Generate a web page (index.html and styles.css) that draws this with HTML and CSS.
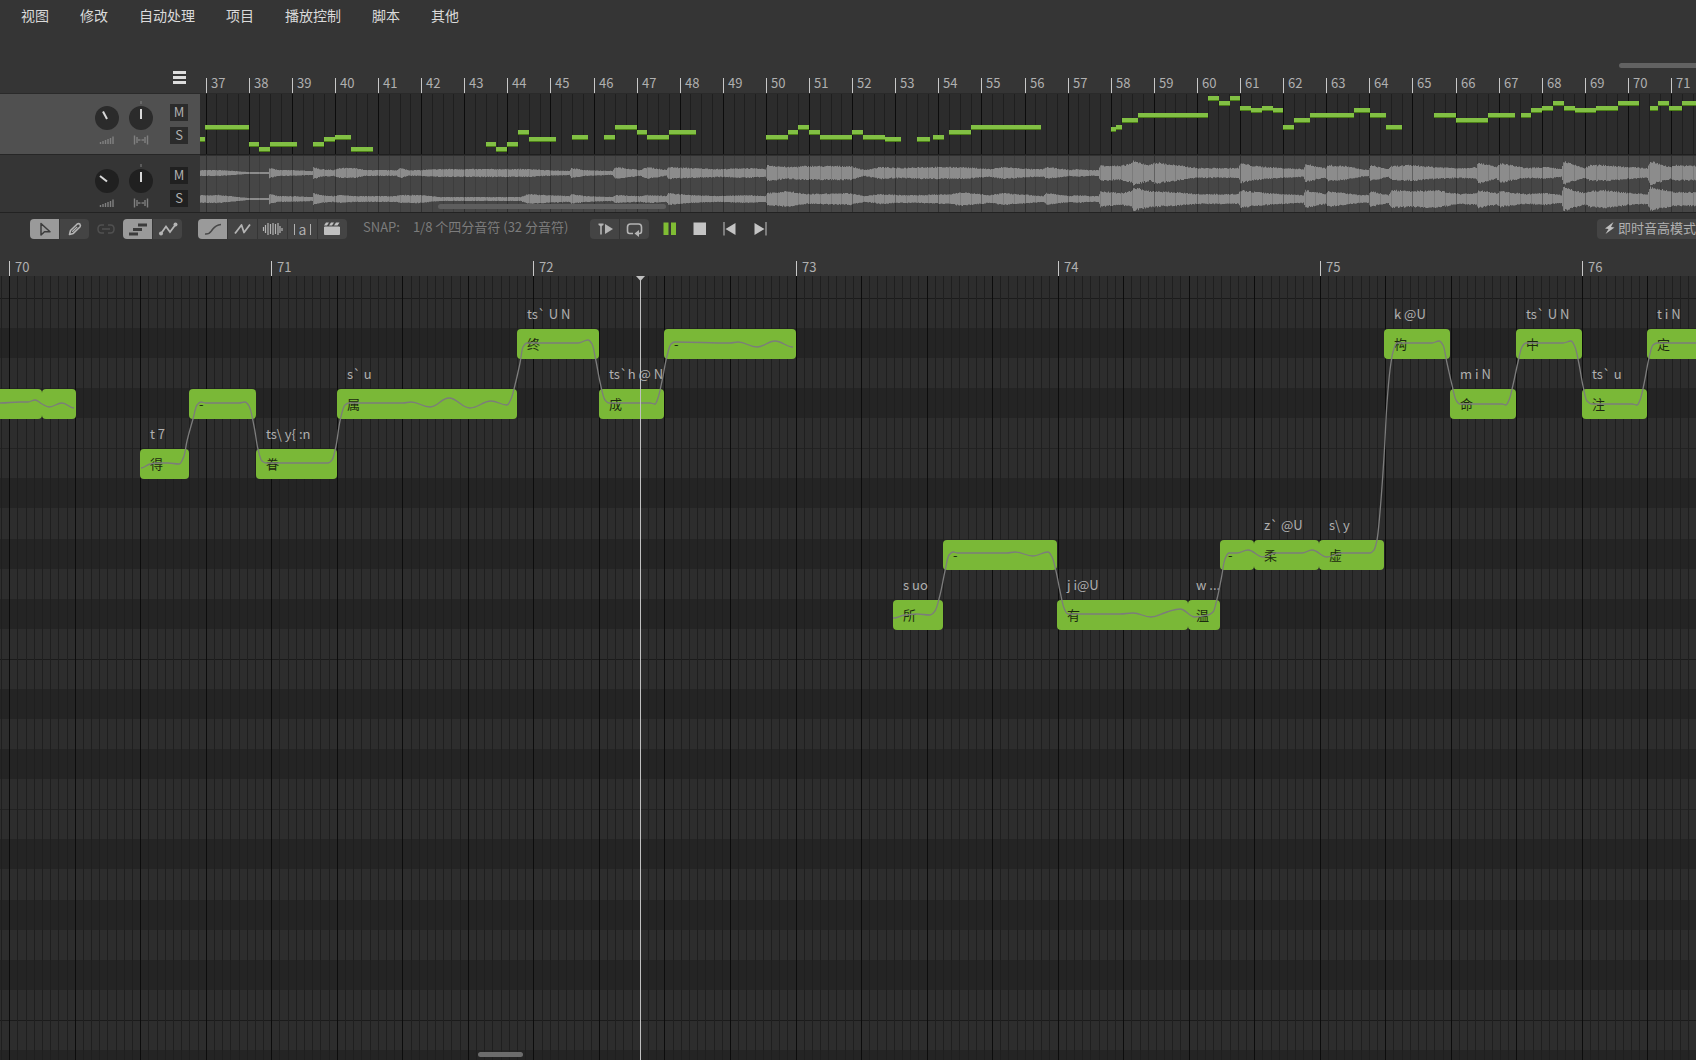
FILE: index.html
```html
<!DOCTYPE html>
<html lang="zh-CN">
<head>
<meta charset="utf-8">
<title>钢琴卷帘</title>
<link rel="stylesheet" href="styles.css">
</head>
<body>
<div class="app">
  <nav class="menu" aria-label="主菜单">
    <button type="button">视图</button>
    <button type="button">修改</button>
    <button type="button">自动处理</button>
    <button type="button">项目</button>
    <button type="button">播放控制</button>
    <button type="button">脚本</button>
    <button type="button">其他</button>
  </nav>

  <section class="arranger" aria-label="编排">
    <div class="corner">
      <button type="button" class="list-button" aria-label="音轨列表">
        <svg width="14" height="14" viewBox="0 0 14 14"><path d="M0 1.5h13M0 6.5h13M0 11.500h13" stroke="#dcdcdc" stroke-width="3"/></svg>
      </button>
    </div>
    <div class="ruler ruler-top" id="topRuler"><div class="thumb thumb-top"></div></div>

    <div class="track-head selected">
      <label class="knob" title="音量">
        <svg width="24" height="44" viewBox="0 0 24 44"><circle cx="12" cy="17" r="12" class="dial"/><path d="M8 10.500L12 18" class="needle"/><use href="#levels"/></svg>
        <input type="range" aria-label="音量">
      </label>
      <label class="knob" title="声像">
        <svg width="24" height="44" viewBox="0 0 24 44"><path d="M12 0v3" class="mark"/><circle cx="12" cy="17" r="12" class="dial"/><path d="M12 8v10" class="needle"/><use href="#pan"/></svg>
        <input type="range" aria-label="声像">
      </label>
      <div class="mute-solo"><button type="button">M</button><button type="button">S</button></div>
    </div>
    <div class="lane lane-notes" id="noteLane"></div>

    <div class="track-head">
      <label class="knob" title="音量">
        <svg width="24" height="44" viewBox="0 0 24 44"><circle cx="12" cy="17" r="12" class="dial"/><path d="M5 12L12 17.500" class="needle"/><use href="#levels"/></svg>
        <input type="range" aria-label="音量">
      </label>
      <label class="knob" title="声像">
        <svg width="24" height="44" viewBox="0 0 24 44"><path d="M12 0v3" class="mark"/><circle cx="12" cy="17" r="12" class="dial"/><path d="M12 8v10" class="needle"/><use href="#pan"/></svg>
        <input type="range" aria-label="声像">
      </label>
      <div class="mute-solo"><button type="button">M</button><button type="button">S</button></div>
    </div>
    <div class="lane lane-audio" id="audioLane"><div class="thumb thumb-lane"></div></div>
  </section>

  <div class="toolbar" role="toolbar" aria-label="工具栏">
    <div class="group">
      <button type="button" class="on" aria-label="选择"><svg width="29" height="20" viewBox="0 0 29 20"><path d="M11 4.500V16l3.500-3.300H20z" fill="none" stroke="#3c3c3c" stroke-width="1.500" stroke-linejoin="round"/></svg></button>
      <button type="button" aria-label="铅笔"><svg width="29" height="20" viewBox="0 0 29 20"><path d="M9.500 15.500l1-4 6.500-6.300q1.600-1.200 2.900 0 1.100 1.400 0 2.800l-6.600 6.400z" fill="none" stroke="#b4b4b4" stroke-width="1.600" stroke-linejoin="round"/><path d="M12.200 12.800l5-4.900" stroke="#b4b4b4" stroke-width="1.200"/></svg></button>
    </div>
    <button type="button" class="link-button" aria-label="链接"><svg width="18" height="20" viewBox="0 0 18 20"><path d="M7 6H4.500Q1 6 1 10t3.500 4H7M11 6h2.500Q17 6 17 10t-3.500 4H11M5 10h8" fill="none" stroke="#505050" stroke-width="1.500"/></svg></button>
    <div class="group">
      <button type="button" class="on" aria-label="音符"><svg width="29" height="20" viewBox="0 0 29 20"><path d="M15 6h9M10 10.500h9M6 15h9" stroke="#3c3c3c" stroke-width="3"/></svg></button>
      <button type="button" aria-label="参数"><svg width="29" height="20" viewBox="0 0 29 20"><path d="M8 14.500l5-7 4 5.500 6-8" fill="none" stroke="#b4b4b4" stroke-width="1.800"/><circle cx="8" cy="14.500" r="2" fill="#b4b4b4"/><circle cx="22.500" cy="5.500" r="2" fill="#b4b4b4"/></svg></button>
    </div>
    <div class="group group-wide">
      <button type="button" class="on" aria-label="曲线"><svg width="29" height="20" viewBox="0 0 29 20"><path d="M7 15c5 .500 5.500-2 7.500-4.500S18 6 23 5.500" fill="none" stroke="#484848" stroke-width="1.600"/></svg></button>
      <button type="button" aria-label="折线"><svg width="29" height="20" viewBox="0 0 29 20"><path d="M7 14.500l6.500-8.500 2.500 7.500 6-8" fill="none" stroke="#b4b4b4" stroke-width="1.800" stroke-linejoin="round"/></svg></button>
      <button type="button" aria-label="波形"><svg width="29" height="20" viewBox="0 0 29 20"><path d="M5.500 8v4M7.500 6v8M10 4v12M12.500 5v10M15 4v12M17.500 5v10M20 4v12M22 7v7M24 9v3" stroke="#b4b4b4" stroke-width="1.200"/></svg></button>
      <button type="button" class="phone" aria-label="音素"><i></i><span>a</span><i></i></button>
      <button type="button" aria-label="场记板"><svg width="29" height="20" viewBox="0 0 29 20"><path d="M6.500 8h15v7.500h-15z" fill="#c0c0c0" stroke="#c0c0c0" stroke-linejoin="round"/><path d="M6 6.500l2-3h3l-2 3zM11 6.500l2-3h3l-2 3zM16 6.500l2-3h3.500l-2 3z" fill="#c0c0c0"/></svg></button>
    </div>
    <label class="snap-label" for="snap">SNAP:</label>
    <select class="snap" id="snap"><option>1/8 个四分音符 (32 分音符)</option></select>
    <div class="group">
      <button type="button" aria-label="从标记播放"><svg width="29" height="20" viewBox="0 0 29 20"><path d="M8.500 4.500h5v1.500l-2.500 1.500-2.500-1.500z" fill="#b4b4b4"/><path d="M11 6v9.500" stroke="#b4b4b4" stroke-width="1.600"/><path d="M15 5l8 5-8 5z" fill="#b4b4b4"/></svg></button>
      <button type="button" aria-label="循环"><svg width="29" height="20" viewBox="0 0 29 20"><path d="M13 14.500H9.500Q7.500 14.500 7.500 12V8Q7.500 5 10.500 5h8Q21.500 5 21.500 8v4Q21.500 14.500 19.500 14.500h-2" fill="none" stroke="#b4b4b4" stroke-width="1.600"/><path d="M19 11v7l-4.500-3.500z" fill="#b4b4b4"/></svg></button>
    </div>
    <div class="transport">
      <button type="button" aria-label="暂停"><svg width="14" height="14" viewBox="0 0 14 14"><path d="M.500.500h5v12.500h-5zM8 .500h5v12.500H8z" fill="#80bd34"/></svg></button>
      <button type="button" aria-label="停止"><svg width="14" height="14" viewBox="0 0 14 14"><path d="M.500.500H13V13H.500z" fill="#c4c4c4"/></svg></button>
      <button type="button" aria-label="回到开头"><svg width="14" height="14" viewBox="0 0 14 14"><path d="M.500 0h1v13.500h-1zM12.500 1v12L2.500 7z" fill="#c4c4c4"/></svg></button>
      <button type="button" aria-label="跳到结尾"><svg width="14" height="14" viewBox="0 0 14 14"><path d="M12.500 0h1v13.500h-1zM1.500 1v12l10-6z" fill="#c4c4c4"/></svg></button>
    </div>
    <button type="button" class="live"><svg width="11" height="14" viewBox="0 0 11 14"><path d="M9.500 1L1 7.500l3.500.500L1.500 13 10.500 6.500 7 6z" fill="#c0c0c0"/></svg>即时音高模式</button>
  </div>

  <div class="ruler ruler-roll" id="rollRuler"></div>
  <main class="roll" id="roll">
    <div class="playhead"><svg width="9" height="5" viewBox="0 0 9 5"><path d="M0 0h9L4.500 5z" fill="#c0c0c0"/></svg></div>
    <div class="thumb thumb-roll"></div>
  </main>
</div>

<svg class="defs" width="0" height="0" aria-hidden="true">
  <defs>
    <g id="levels"><path d="M5.500 41v2M8 40v3M10.500 39v4M13 38v5M15.500 37v6M18 35.500v7.500" stroke="#808080" stroke-width="1.400"/></g>
    <g id="pan"><path d="M5.500 34.500v9M8 36v6M16 36v6M18.500 34.500v9M10 38v2M14 38v2M12 38.500v1" stroke="#808080" stroke-width="1.400"/></g>
  </defs>
</svg>
<script src="app.js"></script>
</body>
</html>
```
FILE: styles.css
```css
* { box-sizing: border-box; }

body {
  margin: 0;
  background: #353535;
  color: #b0b0b0;
  font: 13px/16px "Noto Sans CJK SC", "Noto Sans", sans-serif;
}

button, select, input {
  margin: 0;
  padding: 0;
  border: 0;
  background: none;
  color: inherit;
  font: inherit;
}

svg { display: block; }
.defs { position: absolute; }

.app {
  display: flex;
  flex-direction: column;
  min-height: 100vh;
  overflow: hidden;
}

/* Menu */
.menu {
  display: flex;
  gap: 31px;
  height: 30px;
  padding-left: 21px;
  color: #dadada;
  font-size: 14px;
}

/* Arranger */
.arranger {
  display: grid;
  grid-template-columns: 200px 1fr;
  grid-template-rows: 64px 61px 57px;
  border-bottom: 1px solid #222;
}

.corner {
  display: flex;
  justify-content: flex-end;
  align-items: flex-end;
  padding: 0 13px 8px 0;
  border-bottom: 1px solid #2a2a2a;
}

.ruler {
  position: relative;
  overflow: hidden;
}

.ruler-top { border-bottom: 1px solid #2a2a2a; }
.ruler-roll { height: 31px; }

.bar {
  position: absolute;
  bottom: 0;
  height: 15px;
  padding-left: 4px;
  border-left: 1px solid #c8c8c8;
  line-height: 12px;
}
.ruler-top .bar { line-height: 10px; }
.ruler-roll .bar { padding-left: 5px; }

.track-head {
  display: flex;
  justify-content: flex-end;
  align-items: flex-start;
  gap: 10px;
  padding: 7px 12px 0 0;
}
.track-head.selected {
  background: #505050;
  border-bottom: 1px solid #262626;
}
.track-head:not(.selected) { padding-top: 9px; }

.knob {
  position: relative;
}
.knob input {
  position: absolute;
  inset: 0;
  width: 100%;
  opacity: 0;
}
.dial { fill: #202020; }
.selected .dial { fill: #2b2b2b; }
.needle { stroke: #d8d8d8; stroke-width: 2; }
.mark { stroke: #808080; }

.mute-solo {
  display: grid;
  gap: 6px;
  padding-top: 3px;
  margin-left: 7px;
}
.mute-solo button {
  width: 18px;
  height: 17px;
  padding-bottom: 2px;
  background: #202020;
  line-height: 15px;
}
.selected .mute-solo button { background: #2b2b2b; }

.lane {
  position: relative;
  overflow: hidden;
}
.lane-notes { background: #2c2c2c; border-bottom: 1px solid #1f1f1f; }
.lane-audio { background: #464646; border-top: 1px solid #303030; }

.drawing {
  position: absolute;
  left: 0;
  top: 0;
  width: 100%;
  height: 100%;
}

.thumb {
  position: absolute;
  z-index: 3;
  height: 5px;
  border-radius: 3px;
}
.thumb-top { left: 1419px; right: -20px; top: 33px; background: #626262; }
.thumb-lane { left: 238px; width: 228px; bottom: 3px; background: #5e5e5e; }
.thumb-roll { left: 478px; width: 45px; bottom: 3px; background: #6c6c6c; }

/* Toolbar */
.toolbar {
  display: flex;
  align-items: flex-start;
  height: 32px;
  padding: 6px 0 0 30px;
}
.group {
  display: flex;
  gap: 1px;
  border-radius: 4px;
  overflow: hidden;
}
.group button {
  width: 29px;
  height: 20px;
  background: #444;
}
.group .on { background: #9a9a9a; }
.group-wide { margin: 0 16px; }
.link-button { margin: 0 8px; }

.phone {
  display: flex;
  justify-content: center;
  align-items: center;
  gap: 4px;
  line-height: 16px;
}
.phone span { font-size: 14px; line-height: 14px; padding-bottom: 1px; }
.phone i { width: 1px; height: 11px; background: #b0b0b0; }

.snap-label, .snap {
  color: #7c7c7c;
  line-height: 16px;
}
.snap {
  appearance: none;
  width: 163px;
  height: 16px;
  margin: 0 14px 0 13px;
}

.transport {
  display: flex;
  gap: 16px;
  padding: 3px 0 0 14px;
}

.live {
  display: flex;
  flex: none;
  align-items: center;
  gap: 3px;
  width: 112px;
  height: 20px;
  margin: 0 -13px 0 auto;
  padding: 0 0 3px 7px;
  background: #444;
  border-radius: 4px;
}

/* Piano roll */
.roll {
  position: relative;
  flex: 1;
  min-height: 400px;
  overflow: hidden;
  background: repeating-linear-gradient(
    #1b1b1b 0 1px, #2d2d2d 1px 30px, #242424 30px 60px, #2d2d2d 60px 90px,
    #242424 90px 120px, #2d2d2d 120px 150px, #222 150px 151px, #2d2d2d 151px 180px,
    #242424 180px 210px, #2d2d2d 210px 241px, #242424 241px 271px, #2d2d2d 271px 301px,
    #242424 301px 331px, #2d2d2d 331px 361px);
  background-position: 0 22px;
  background-size: 100% 361px;
}

.note {
  position: absolute;
  height: 30px;
  padding: 7px 0 0 10px;
  border-radius: 4px;
  background: #7ab837;
  color: #1c2a10;
}
.note .phonemes {
  position: absolute;
  left: 10px;
  top: -23px;
  color: #b0b0b0;
  white-space: nowrap;
}
.note.narrow { padding-left: 8px; }
.note.narrow .phonemes { left: 8px; }
.pitch { z-index: 1; }
.playhead {
  position: absolute;
  z-index: 2;
  left: 636px;
  top: 0;
  bottom: 0;
  width: 9px;
  background: linear-gradient(#c0c0c0, #c0c0c0) 4px 0 / 1px 100% no-repeat;
}
```
FILE: app.js
```js
const SVG = 'http://www.w3.org/2000/svg';
const byId = id => document.getElementById(id);

// Time scale of each view: x of the first bar, pixels per bar.
const overviewScale = { first: 37, x0: 5.6, width: 43.1, bars: 80 };
const rollScale = { first: 70, x0: 9.2, width: 262.1, bars: 16 };

function drawing(host, className) {
  const svg = document.createElementNS(SVG, 'svg');
  svg.setAttribute('class', 'drawing ' + (className || ''));
  host.append(svg);
  return svg;
}

function path(svg, d, attrs) {
  const p = document.createElementNS(SVG, 'path');
  p.setAttribute('d', d);
  for (const key in attrs) p.setAttribute(key, attrs[key]);
  svg.append(p);
}

function ruler(host, scale) {
  for (let i = 0; i < scale.bars; i++) {
    const x = Math.round(scale.x0 + i * scale.width);
    if (x >= host.clientWidth) break;
    const bar = document.createElement('span');
    bar.className = 'bar';
    bar.textContent = scale.first + i;
    bar.style.left = x + 'px';
    host.append(bar);
  }
}

function grid(host, scale, steps, strong, minor, major) {
  let fine = '', bold = '';
  for (let i = -steps; i < scale.bars * steps; i++) {
    const x = Math.round(scale.x0 + i * scale.width / steps);
    const line = `M${x} 0h1v2000h-1z`;
    if (i % strong === 0) bold += line; else fine += line;
  }
  const svg = drawing(host);
  path(svg, fine, { fill: minor });
  path(svg, bold, { fill: major });
}

ruler(byId('topRuler'), overviewScale);
ruler(byId('rollRuler'), rollScale);

// Track overview: start, end, height in the lane.
const overview = [
  [0,5,43],[5,49,31],[49,59,48],[59,70,53],[70,97,48],[113,124,48],[124,135,43],[135,151,41],[151,173,53],
  [286,296,48],[296,307,53],[307,318,48],[318,329,36],[329,356,43],[372,388,41],[404,415,41],[415,437,31],
  [437,447,36],[447,469,41],[469,496,36],[566,588,41],[588,598,36],[598,609,31],[609,620,36],[620,652,41],
  [652,663,36],[663,685,41],[685,701,43],[717,730,43],[733,744,41],[749,771,36],[771,841,31],[911,916,33],
  [916,922,31],[922,938,24],[938,1008,19],[1008,1019,2],[1019,1030,7],[1030,1040,2],[1040,1051,12],
  [1051,1062,14],[1062,1073,12],[1073,1083,14],[1083,1094,31],[1094,1110,24],[1110,1154,19],[1154,1170,14],
  [1170,1186,19],[1186,1202,31],[1234,1256,19],[1256,1288,24],[1288,1315,19],[1321,1331,19],[1331,1342,14],
  [1342,1353,12],[1353,1364,7],[1364,1375,12],[1375,1396,14],[1396,1418,12],[1418,1439,7],[1450,1458,12],
  [1458,1469,7],[1469,1482,12],[1482,1504,7]
];
grid(byId('noteLane'), overviewScale, 4, 4, '#1f1f1f', '#0c0c0c');
{
  const svg = drawing(byId('noteLane'));
  path(svg, overview.map(([a, b, y]) => `M${a} ${y}H${b}v4H${a}z`).join(''), { fill: '#82c044' });
  path(svg, overview.map(([a, b, y]) => `M${a} ${y + 4}H${b}v1H${a}z`).join(''), { fill: '#4d8018' });
}

// Loudness envelope of the audio clip: x, left channel, right channel.
const envelope = [
  [0,3,4],[20,3,4],[48,1,1],[68,1,1],[69,5,5],[78,3,3],[90,3,3],[112,2,2],[113,6,6],[120,4,4],[133,3,3],[140,5,4],
  [155,5,3],[165,3,3],[196,3,3],[200,5,4],[208,3,4],[220,3,4],[240,4,2],[285,4,2],[320,4,2],[328,4,5],[345,3,4],
  [369,2,3],[371,5,5],[385,3,3],[412,2,2],[415,6,4],[440,3,3],[447,6,4],[466,3,3],[468,6,6],[490,5,4],[520,4,3],
  [545,5,4],[565,4,3],[567,8,6],[588,6,8],[605,7,5],[650,7,6],[664,3,3],[680,6,5],[700,5,4],[717,6,4],[750,6,5],
  [761,6,7],[790,4,4],[803,6,6],[830,4,4],[843,4,3],[846,6,6],[870,3,3],[877,4,4],[888,3,3],[898,3,3],[900,8,8],
  [920,7,6],[931,10,8],[933,12,12],[950,8,8],[954,11,8],[975,8,7],[997,5,5],[1018,5,5],[1038,5,5],[1040,10,9],
  [1055,7,7],[1083,5,5],[1103,4,4],[1105,9,9],[1125,5,5],[1128,8,8],[1145,7,6],[1160,4,4],[1168,3,4],[1170,8,8],
  [1188,4,4],[1191,7,9],[1212,8,8],[1235,6,9],[1260,5,5],[1276,6,6],[1278,11,9],[1296,6,6],[1300,10,8],[1325,5,5],
  [1345,6,6],[1361,4,4],[1363,12,12],[1384,5,6],[1390,8,8],[1405,8,9],[1430,6,6],[1447,5,5],[1450,12,12],
  [1470,6,8],[1473,8,7],[1500,7,7]
];
function level(x, channel) {
  let i = 1;
  while (i < envelope.length - 1 && envelope[i][0] < x) i++;
  const a = envelope[i - 1], b = envelope[i];
  const t = Math.min(1, (x - a[0]) / (b[0] - a[0]));
  return a[channel] + (b[channel] - a[channel]) * t;
}
let seed = 7;
const random = () => (seed = seed * 16807 % 2147483647) / 2147483647;
{
  const svg = drawing(byId('audioLane'));
  let d = '';
  for (const [channel, y] of [[1, 17], [2, 43]]) {
    for (let x = 0; x < 2400; x++) {
      const size = level(x, channel);
      const up = size * (0.85 + random() * 0.2), down = size * (0.85 + random() * 0.2);
      d += `M${x} ${(y - up).toFixed(1)}h1V${(y + down).toFixed(1)}h-1z`;
    }
  }
  path(svg, d, { fill: '#8c8c8c' });
  grid(byId('audioLane'), overviewScale, 4, 4, 'rgba(0,0,0,.12)', 'rgba(0,0,0,.3)');
}

// Piano roll notes: start, end, top, lyric, phonemes.
const A = 53, B = 113, C = 173, D = 264, E = 324;
const notes = [
  [-20,42,B,'',''],[42,76,B,'',''],[140,189,C,'得','t 7'],[189,256,B,'-',''],[256,337,C,'眷','ts\\ y{ :n'],
  [337,517,B,'属','s` u'],[517,599,A,'终','ts` U N'],[599,664,B,'成','ts`h @ N'],[664,796,A,'-',''],
  [893,943,E,'所','s uo'],[943,1057,D,'-',''],[1057,1188,E,'有','j i@U'],[1188,1220,E,'温','w ...'],
  [1220,1254,D,'-',''],[1254,1319,D,'柔','z` @U'],[1319,1384,D,'虚','s\\ y'],[1384,1450,A,'构','k @U'],
  [1450,1516,B,'命','m i N'],[1516,1582,A,'中','ts` U N'],[1582,1647,B,'注','ts` u'],[1647,1713,A,'定','t i N']
];
grid(byId('roll'), rollScale, 32, 8, '#1f1f1f', '#0c0c0c');
for (const [start, end, y, lyric, phonemes] of notes) {
  const note = document.createElement('div');
  note.className = end - start < 40 ? 'note narrow' : 'note';
  note.textContent = lyric;
  note.style.left = start + 'px';
  note.style.top = y + 'px';
  note.style.width = end - start + 'px';
  if (phonemes) {
    const label = document.createElement('span');
    label.className = 'phonemes';
    label.textContent = phonemes;
    note.append(label);
  }
  byId('roll').append(note);
}

// Sung pitch, one list of x, y pairs for each phrase.
const phrases = [
  [0,127,20,126,28,126,35,124,42,128,49,131,62,127,74,132],
  [141,192,150,188,157,187,168,187,179,188,184,180,187,165,193,143,197,129,201,126,206,127,239,127,245,126,249,130,
   254,150,258,173,262,185,266,187,328,187,332,184,336,170,340,145,345,129,349,127,403,127,411,126,430,131,449,122,
   470,132,491,125,507,129,511,123,515,109,520,87,523,71,527,67,578,67,588,64,592,68,596,85,600,106,605,124,609,127,
   650,127,655,128,658,122,662,105,667,80,671,68,675,66,730,67,738,66,757,71,775,65,793,71],
  [893,342,905,339,917,338,930,339,935,335,940,319,945,295,949,279,953,276,958,277,1007,277,1015,276,1033,280,1048,276,
   1052,281,1056,295,1060,315,1064,332,1068,338,1120,338,1133,337,1151,341,1167,336,1180,333,1195,341,1208,339,
   1213,336,1217,323,1221,304,1225,283,1229,277,1237,277,1248,274,1263,281,1275,277,1302,277,1312,274,1327,281,
   1342,277,1370,277,1374,274,1377,264,1380,236,1384,181,1387,127,1390,94,1393,76,1397,67,1432,67,1439,65,1443,69,
   1447,87,1452,109,1456,124,1460,128,1502,128,1506,129,1509,124,1513,109,1518,86,1522,71,1526,67,1563,67,1571,65,
   1575,71,1579,88,1583,110,1587,125,1592,128,1632,128,1637,129,1640,124,1644,108,1649,82,1653,69,1657,67,1713,67]
];
function curve(flat) {
  const pts = [];
  for (let i = 0; i < flat.length; i += 2) pts.push([flat[i], flat[i + 1]]);
  const slope = pts.map((p, i) => {
    if (i === 0 || i === pts.length - 1) return 0;
    const before = (p[1] - pts[i - 1][1]) / (p[0] - pts[i - 1][0]);
    const after = (pts[i + 1][1] - p[1]) / (pts[i + 1][0] - p[0]);
    return before * after <= 0 ? 0 : 2 * before * after / (before + after);
  });
  let d = `M${pts[0]}`;
  for (let i = 1; i < pts.length; i++) {
    const [x0, y0] = pts[i - 1], [x1, y1] = pts[i], h = (x1 - x0) * 0.4;
    d += `C${x0 + h} ${y0 + slope[i - 1] * h} ${x1 - h} ${y1 - slope[i] * h} ${x1} ${y1}`;
  }
  return d;
}
const pitch = drawing(byId('roll'), 'pitch');
for (const phrase of phrases) {
  path(pitch, curve(phrase), { fill: 'none', stroke: '#7c7c7c', 'stroke-width': 1.3 });
}
```
